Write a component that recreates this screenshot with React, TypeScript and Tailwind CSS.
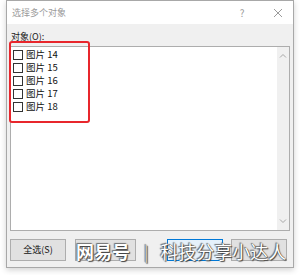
const font = "font-['Microsoft_YaHei','Noto_Sans_CJK_SC','Noto_Sans',sans-serif]";

const items = ["图片 14", "图片 15", "图片 16", "图片 17", "图片 18"];

const Chevron = ({ up }: { up?: boolean }) => (
  <svg width="8" height="5" viewBox="0 0 8 5" className="block">
    <path
      d={up ? "M1 4.5 L4 1.5 L7 4.5" : "M1 0.5 L4 3.5 L7 0.5"}
      fill="none"
      stroke="#a6a6a6"
      strokeWidth="1"
    />
  </svg>
);

export default function App() {
  return (
    <div className={`relative w-[300px] h-[275px] bg-white overflow-hidden ${font}`}>
      <div className="ml-[6px] w-[288px] h-[268px] border border-[#a8a8a8] bg-[#f0f0f0] shadow-[0_2px_6px_rgba(0,0,0,0.18)] flex flex-col">
        {/* title bar */}
        <div className="h-[23px] bg-white flex items-center pl-[5px] pr-[10px] text-[9px] text-[#9b9b9b]">
          <span className="flex-1 leading-none">选择多个对象</span>
          <span className="w-[10px] text-center text-[10px] leading-none mr-[26px]">?</span>
          <svg width="10" height="10" viewBox="0 0 10 10">
            <path d="M1 1 L9 9 M9 1 L1 9" stroke="#9b9b9b" strokeWidth="1" />
          </svg>
        </div>

        {/* body */}
        <div className="flex-1 flex flex-col px-[3px]">
          <div className="h-[22px] pt-[7px] pl-[1px] text-[9px] leading-[11px] text-[#222]">对象(O):</div>

          <div className="h-[185px] border border-[#adadad] bg-white flex">
            <div className="flex-1 pt-[1px] pl-[2px]">
              {items.map((t) => (
                <div key={t} className="h-[13px] flex items-center gap-[3px]">
                  <div className="w-[10px] h-[10px] border border-[#333] bg-white" />
                  <span className="text-[9.5px] leading-none text-[#111]">{t}</span>
                </div>
              ))}
            </div>
            <div className="w-[12px] bg-[#f0f0f0] flex flex-col items-center justify-between py-[6px]">
              <Chevron up />
              <Chevron />
            </div>
          </div>

          <div className="mt-[8px] flex items-center">
            <button className="w-[56px] h-[22px] border border-[#adadad] bg-[#e1e1e1] text-[9px] text-[#111]">
              全选(S)
            </button>
            <button className="ml-[9px] w-[61px] h-[22px] border border-[#adadad] bg-[#e1e1e1]" />
            <button className="ml-[31px] w-[56px] h-[22px] border border-[#0078d7] bg-[#e5f1fb]" />
            <button className="ml-[8px] w-[56px] h-[22px] border border-[#adadad] bg-[#e1e1e1]" />
          </div>
        </div>
      </div>

      {/* red highlight */}
      <div className="absolute left-[9px] top-[41px] w-[81px] h-[82px] border-2 border-[#e8262c] rounded-[3px]" />

      {/* watermark */}
      <div className="absolute left-[76px] top-[242px] flex items-center text-white text-[18px] leading-none [text-shadow:0_0_1px_#333,1px_1px_1px_#444,-1px_-1px_1px_#777]">
        <span className="font-bold">网易号</span>
        <span className="ml-[14px] text-[16px] text-[#ddd]">|</span>
        <span className="ml-[12px]">科技分享小达人</span>
      </div>
    </div>
  );
}
